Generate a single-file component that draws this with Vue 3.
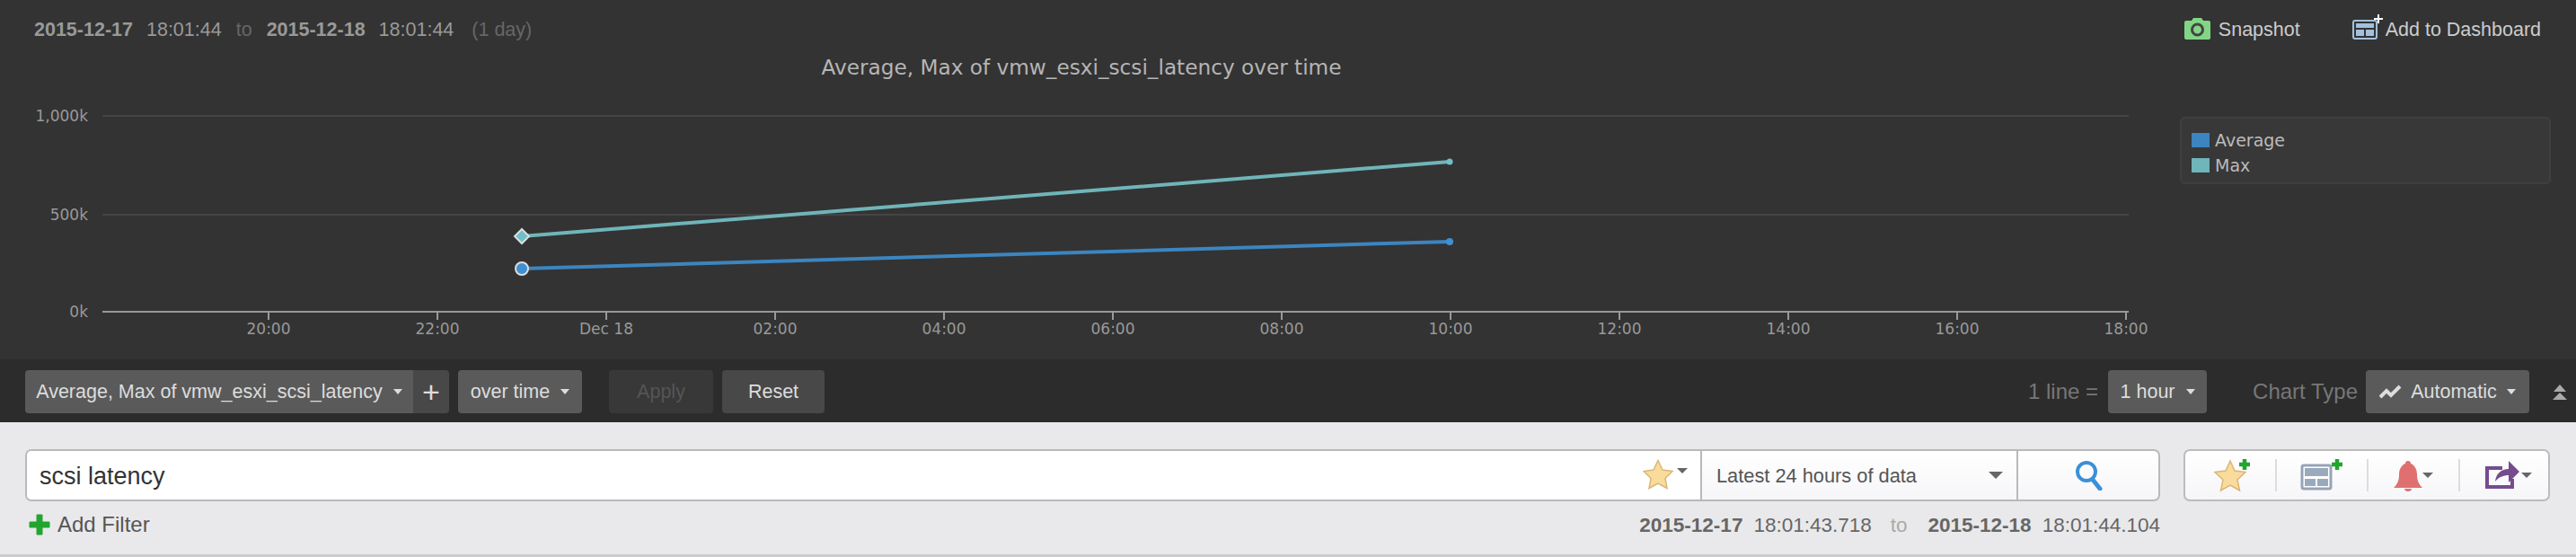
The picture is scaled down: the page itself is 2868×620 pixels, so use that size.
<script setup>
const xTicks = [
  { x: 299, label: "20:00" },
  { x: 487, label: "22:00" },
  { x: 675, label: "Dec 18" },
  { x: 863, label: "02:00" },
  { x: 1051, label: "04:00" },
  { x: 1239, label: "06:00" },
  { x: 1427, label: "08:00" },
  { x: 1615, label: "10:00" },
  { x: 1803, label: "12:00" },
  { x: 1991, label: "14:00" },
  { x: 2179, label: "16:00" },
  { x: 2367, label: "18:00" }
];
const yTicks = [
  { y: 69, label: "1,000k" },
  { y: 179, label: "500k" },
  { y: 287, label: "0k" }
];
</script>

<template>
  <div class="page">
    <section class="chart-panel">
      <header class="chart-head">
        <div class="range">
          <b>2015-12-17</b><span class="time">18:01:44</span><span class="to">to</span>
          <b>2015-12-18</b><span class="time">18:01:44</span><span class="span">(1 day)</span>
        </div>
        <div class="actions">
          <a class="action snapshot">
            <svg width="29" height="24" viewBox="0 0 29 24">
              <path d="M2 3h6l2-3h9l2 3h6a2 2 0 0 1 2 2v17a2 2 0 0 1-2 2H2a2 2 0 0 1-2-2V5a2 2 0 0 1 2-2z" fill="#83d586" />
              <circle cx="14.500" cy="13" r="6" fill="none" stroke="#444" stroke-width="3" />
            </svg>
            <span>Snapshot</span>
          </a>
          <a class="action dash-link">
            <svg class="dash" width="36" height="30" viewBox="0 0 36 30">
              <rect x="1" y="9" width="26" height="20" rx="2" fill="#333" stroke="#a3c0dc" stroke-width="2" />
              <path d="M4 12h20v5H4zM4 19h9v7H4zM15 19h9v7h-9z" fill="#a3c0dc" />
              <path d="M29 2v10M24 7h10" stroke="#fff" stroke-width="2" />
            </svg>
            <span>Add to Dashboard</span>
          </a>
        </div>
      </header>
      <div class="chart-row">
        <svg class="plot" width="2400" height="340" viewBox="0 0 2400 340">
          <text x="1204" y="23" text-anchor="middle" class="title">Average, Max of vmw_esxi_scsi_latency over time</text>
          <line v-for="t in yTicks.slice(0, 2)" :key="t.y" x1="114" x2="2370" :y1="t.y" :y2="t.y" stroke="#444" stroke-width="2" />
          <text v-for="t in yTicks" :key="t.label" x="98" :y="t.y + 6" text-anchor="end" class="axis">{{ t.label }}</text>
          <line x1="114" x2="2370" y1="287" y2="287" stroke="#999" stroke-width="2" />
          <g v-for="t in xTicks" :key="t.x">
            <line :x1="t.x" :x2="t.x" y1="287" y2="296" stroke="#999" stroke-width="2" />
            <text :x="t.x" y="312" text-anchor="middle" class="axis">{{ t.label }}</text>
          </g>
          <polyline points="581,203 1614,120" fill="none" stroke="#6fb5b9" stroke-width="4" />
          <polyline points="581,239 1614,209" fill="none" stroke="#3c85c0" stroke-width="4" />
          <path d="M581 195l8 8-8 8-8-8z" fill="#6fc0c8" stroke="#ddd" stroke-width="2" />
          <circle cx="581" cy="239" r="7" fill="#3f8fd2" stroke="#ddd" stroke-width="2" />
          <circle cx="1614" cy="120" r="3.500" fill="#6fc0c8" />
          <circle cx="1614" cy="209" r="4" fill="#3f8fd2" />
        </svg>
        <ul class="legend">
          <li><i class="swatch avg"></i>Average</li>
          <li><i class="swatch max"></i>Max</li>
        </ul>
      </div>
    </section>

    <section class="toolbar">
      <div class="btn-pair">
        <button class="btn metric">Average, Max of vmw_esxi_scsi_latency<i class="caret"></i></button>
        <button class="btn plus">+</button>
      </div>
      <button class="btn over">over time<i class="caret"></i></button>
      <button class="btn apply">Apply</button>
      <button class="btn reset">Reset</button>
      <div class="toolbar-right">
        <span class="dim">1 line =</span>
        <button class="btn hour">1 hour<i class="caret"></i></button>
        <span class="dim type">Chart Type</span>
        <button class="btn auto">
          <svg width="25" height="16" viewBox="0 0 25 16">
            <path d="M1 14l7-7 5 5 10-10" fill="none" stroke="#ddd" stroke-width="4" />
          </svg>
          Automatic<i class="caret"></i>
        </button>
        <svg class="collapse" width="16" height="17" viewBox="0 0 16 17">
          <path d="M8 0l7 8H1zM8 9l8 8H0z" fill="#aaa" />
        </svg>
      </div>
    </section>

    <section class="search-panel">
      <div class="search-row">
        <div class="search-box">
          <div class="query">
            <span>scsi latency</span>
            <svg class="fav" width="36" height="34" viewBox="0 0 36 34">
              <path d="M17 1.500l5 10.500 11 1.500-8 8 2 11-10-5.500-10 5.500 2-11-8-8 11-1.500z" fill="#f9dc9c" stroke="#d9b676" stroke-width="1.500" />
            </svg>
            <i class="caret dark small"></i>
          </div>
          <div class="period">
            <span>Latest 24 hours of data</span>
            <i class="caret dark"></i>
          </div>
          <div class="go">
            <svg width="30" height="34" viewBox="0 0 30 34">
              <circle cx="12" cy="13" r="10" fill="none" stroke="#3c90d6" stroke-width="4" />
              <path d="M19 22l8 10" stroke="#3c90d6" stroke-width="5" stroke-linecap="round" />
            </svg>
          </div>
        </div>
        <div class="tools">
          <div class="tool">
            <svg width="100" height="52" viewBox="0 0 100 52">
              <path d="M50 10l5 11 12 1.500-9 8.500 2.500 12-10.500-6-10.500 6 2.500-12-9-8.500 12-1.500z" fill="#f9dc9c" stroke="#d9b676" stroke-width="1.500" />
              <path d="M60 14h12M66 8v12" stroke="#22a52e" stroke-width="4.500" />
            </svg>
          </div>
          <div class="tool">
            <svg width="100" height="52" viewBox="0 0 100 52">
              <rect x="28" y="15" width="32" height="26" rx="2" fill="#fff" stroke="#95a4b5" stroke-width="3" />
              <path d="M31 18h26v9H31zM31 30h12v8H31zM45 30h12v8H45z" fill="#9aaabc" />
              <path d="M61 14h12M67 8v12" stroke="#22a52e" stroke-width="4.500" />
            </svg>
          </div>
          <div class="tool">
            <svg width="100" height="52" viewBox="0 0 100 52">
              <path d="M28 40c4-4 6-8 6-15 0-7 4-11 7-12 0-2 1-3 3-3s3 1 3 3c3 1 7 5 7 12 0 7 2 11 6 15z" fill="#e07070" />
              <path d="M40 41h8c0 2-2 3-4 3s-4-1-4-3z" fill="#e07070" />
              <path d="M60 23h12l-6 6z" fill="#666" />
            </svg>
          </div>
          <div class="tool">
            <svg width="98" height="52" viewBox="0 0 98 52">
              <path d="M47 18H30v21h28v-9" fill="none" stroke="#754c8e" stroke-width="4" />
              <path d="M39 33c1-9 7-14 15-14v-9l12 12-12 12v-8c-6 0-11 2-15 7z" fill="#754c8e" />
              <path d="M68 23h12l-6 6z" fill="#666" />
            </svg>
          </div>
        </div>
      </div>
      <div class="filter-row">
        <a class="add-filter">
          <svg width="24" height="24" viewBox="0 0 24 24">
            <path d="M9 1h6v8h8v6h-8v8H9v-8H1V9h8z" fill="#22a52e" stroke="#22a52e" stroke-linejoin="round" />
          </svg>
          Add Filter
        </a>
        <div class="range result">
          <b>2015-12-17</b><span class="time">18:01:43.718</span><span class="to">to</span>
          <b>2015-12-18</b><span class="time">18:01:44.104</span>
        </div>
      </div>
    </section>
  </div>
</template>

<style scoped>
.page {
  width: 2868px;
  height: 620px;
  overflow: hidden;
  font-family: "Liberation Sans", Arial, sans-serif;
}
.chart-panel {
  height: 400px;
  background: #333;
}
.chart-head {
  height: 60px;
  display: flex;
  justify-content: space-between;
  padding: 0 39px 0 38px;
  align-items: flex-start;
}
.range {
  display: flex;
  align-items: baseline;
  font-size: 21.500px;
  color: #999;
  padding-top: 21px;
}
.range b {
  font-weight: bold;
}
.range .time {
  margin-left: 15px;
}
.range .to {
  margin: 0 16px;
  color: #666;
}
.range .span {
  margin-left: 20px;
  color: #666;
}
.actions {
  display: flex;
  gap: 58px;
  padding-top: 14px;
}
.action {
  display: flex;
  align-items: flex-end;
  font-size: 21.500px;
  line-height: 22px;
  color: #ccc;
  gap: 9px;
  height: 30px;
}
.dash-link {
  gap: 1px;
}
.title {
  font-family: "DejaVu Sans", sans-serif;
  font-size: 23.200px;
  fill: #b5b5b5;
}
.axis {
  font-family: "DejaVu Sans", sans-serif;
  font-size: 17px;
  fill: #999;
}
.chart-row {
  display: flex;
}
.plot {
  display: block;
  flex: none;
}
.legend {
  list-style: none;
  margin: 70px 0 0 27px;
  padding: 10px 11px 0;
  box-sizing: border-box;
  width: 413px;
  height: 75px;
  background: #383838;
  border: 2px solid #3f3f3f;
  border-radius: 5px;
  font-family: "DejaVu Sans", sans-serif;
  font-size: 19px;
  color: #bbb;
}
.legend li {
  display: flex;
  align-items: center;
  height: 28px;
  gap: 6px;
}
.swatch {
  width: 20px;
  height: 16px;
}
.swatch.avg {
  background: #3c85c0;
}
.swatch.max {
  background: #6fb5b9;
}

.toolbar {
  height: 70px;
  box-sizing: border-box;
  background: #2c2c2c;
  display: flex;
  align-items: flex-start;
  padding: 12px 10px 0 28px;
}
.btn {
  height: 48px;
  box-sizing: border-box;
  padding: 0;
  border: none;
  border-radius: 4px;
  background: #5a5a5a;
  color: #ddd;
  font-family: inherit;
  font-size: 21.500px;
  display: flex;
  align-items: center;
  justify-content: center;
}
.btn-pair {
  display: flex;
}
.metric {
  width: 432px;
  border-radius: 4px 0 0 4px;
}
.plus {
  width: 40px;
  background: #484848;
  border-radius: 0 4px 4px 0;
  font-size: 34px;
  font-weight: normal;
}
.over {
  width: 138px;
  margin-left: 10px;
}
.apply {
  width: 116px;
  margin-left: 30px;
  background: #383838;
  color: #555;
}
.reset {
  width: 114px;
  margin-left: 10px;
  background: #484848;
}
.caret {
  display: inline-block;
  width: 0;
  height: 0;
  margin-left: 12px;
  border-left: 5.500px solid transparent;
  border-right: 5.500px solid transparent;
  border-top: 6px solid #ddd;
}
.toolbar-right {
  margin-left: auto;
  display: flex;
  align-items: center;
  height: 48px;
}
.dim {
  font-size: 24px;
  color: #777;
}
.hour {
  width: 110px;
  margin-left: 11px;
}
.type {
  margin-left: 51px;
}
.auto {
  width: 182px;
  margin-left: 9px;
  gap: 10px;
}
.auto .caret {
  margin-left: 1px;
}
.collapse {
  margin-left: 26px;
  flex: none;
}

.search-panel {
  height: 150px;
  box-sizing: border-box;
  background: #e9e9eb;
  border-bottom: 3px solid #ccc;
  padding: 30px 29px 0 28px;
}
.search-row {
  display: flex;
  justify-content: space-between;
}
.search-box {
  width: 2377px;
  height: 58px;
  box-sizing: border-box;
  display: flex;
  border: 2.500px solid #b9b9b9;
  border-radius: 7px;
  overflow: hidden;
  background: linear-gradient(#fff, #f6f6f9);
}
.query {
  width: 1865px;
  display: flex;
  align-items: center;
  background: #fff;
  padding-left: 14px;
  box-sizing: border-box;
  border-right: 2px solid #b9b9b9;
  font-size: 27px;
  color: #333;
}
.query span {
  flex: 1;
  margin-top: 2px;
}
.fav {
  flex: none;
  margin-right: 1px;
  margin-top: -3px;
}
.caret.dark {
  border-top-color: #666;
  border-left-width: 8px;
  border-right-width: 8px;
  border-top-width: 8px;
}
.caret.small {
  margin-left: 1px;
  margin-right: 14px;
  margin-top: -10px;
  border-left-width: 6px;
  border-right-width: 6px;
  border-top-width: 6px;
}
.period {
  width: 352px;
  box-sizing: border-box;
  display: flex;
  align-items: center;
  justify-content: space-between;
  padding: 0 15px 0 16px;
  font-size: 21.800px;
  color: #555;
  border-right: 2px solid #b9b9b9;
}
.period span {
  margin-top: 2px;
}
.go {
  flex: 1;
  display: flex;
  align-items: center;
  justify-content: center;
  padding-left: 2px;
}
.tools {
  width: 408px;
  height: 58px;
  box-sizing: border-box;
  display: flex;
  align-items: center;
  border: 2.500px solid #bcbcbc;
  border-radius: 7px;
  background: linear-gradient(#fff, #f6f6f9);
}
.tool {
  flex: none;
  width: 102px;
  height: 36px;
  box-sizing: border-box;
  position: relative;
  border-right: 2px solid #ddd;
}
.tool:last-child {
  border-right: none;
  width: 98px;
}
.tool svg {
  position: absolute;
  left: 0;
  top: -8px;
}
.filter-row {
  display: flex;
  justify-content: space-between;
  padding-right: 434px;
  margin-top: 14px;
}
.add-filter {
  display: flex;
  align-items: center;
  gap: 8px;
  padding-left: 4px;
  font-size: 24px;
  color: #555;
  height: 24px;
}
.range.result {
  padding-top: 0;
  font-size: 22.500px;
  color: #666;
}
.range.result .time {
  margin-left: 12px;
}
.range.result .to {
  margin: 0 23px 0 21px;
  color: #aaa;
}
</style>
